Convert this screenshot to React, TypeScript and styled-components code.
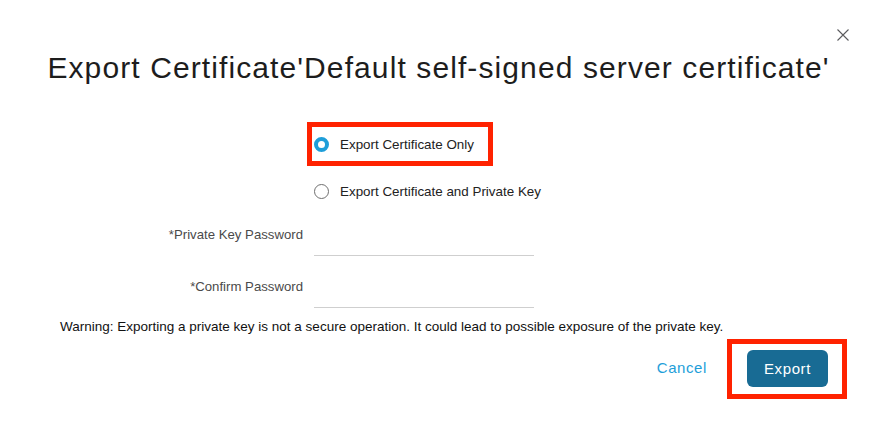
import React from "react";
import styled, { createGlobalStyle } from "styled-components";

const GlobalStyle = createGlobalStyle`
  html, body {
    margin: 0;
    padding: 0;
    background: #ffffff;
  }
  body {
    font-family: "Liberation Sans", Arial, sans-serif;
    color: #222222;
  }
`;

const Dialog = styled.div`
  width: 877px;
  height: 435px;
  box-sizing: border-box;
  padding-top: 29px;
  background: #ffffff;
  display: flex;
  flex-direction: column;
`;

const CloseRow = styled.div`
  display: flex;
  justify-content: flex-end;
  padding-right: 28px;
  height: 12px;
`;

const CloseButton = styled.button`
  width: 12px;
  height: 12px;
  padding: 0;
  border: none;
  background: none;
  display: flex;
  cursor: pointer;
`;

const Title = styled.h1`
  margin: 9px 0 0;
  font-size: 30px;
  line-height: 36px;
  font-weight: 400;
  letter-spacing: 1.1px;
  text-align: center;
  color: #1d1d1d;
  white-space: nowrap;
`;

const Form = styled.div`
  margin-top: 36px;
  display: grid;
  grid-template-columns: 303px 1fr;
  column-gap: 11px;
`;

const FieldLabel = styled.label<{ $top: number }>`
  grid-column: 1;
  text-align: right;
  font-size: 13.2px;
  line-height: 20px;
  color: #4a4a4a;
  padding-top: ${(p) => p.$top}px;
`;

const Cell = styled.div<{ $mt: number }>`
  grid-column: 2;
  margin-top: ${(p) => p.$mt}px;
  display: flex;
`;

const Highlight = styled.div<{ $pad: string; $ml?: number }>`
  border: 5px solid #ff2200;
  padding: ${(p) => p.$pad};
  margin-left: ${(p) => p.$ml ?? 0}px;
  display: inline-flex;
  align-items: center;
`;

const RadioRow = styled.label`
  display: flex;
  align-items: center;
  height: 34px;
  gap: 11px;
  font-size: 13.4px;
  color: #222222;
`;

const RadioDot = styled.span<{ $checked: boolean }>`
  width: 15px;
  height: 15px;
  box-sizing: border-box;
  border-radius: 50%;
  flex: none;
  border: ${(p) => (p.$checked ? "4px solid #1e9ed9" : "1px solid #6f6f6f")};
  background: #ffffff;
`;

const TextInput = styled.input`
  width: 220px;
  height: 32px;
  box-sizing: border-box;
  border: none;
  border-bottom: 1px solid #cfcfcf;
  outline: none;
  background: transparent;
  font-family: inherit;
  font-size: 13px;
`;

const Warning = styled.p`
  margin: 10px 0 0 60px;
  font-size: 13.5px;
  line-height: 18px;
  color: #111111;
`;

const Footer = styled.div`
  margin-top: 3px;
  display: flex;
  justify-content: flex-end;
  align-items: center;
  padding-right: 30px;
  gap: 20px;
`;

const CancelLink = styled.button`
  border: none;
  background: none;
  padding: 0 0 4px;
  font-family: inherit;
  font-size: 15px;
  letter-spacing: 0.6px;
  color: #1e9ed9;
  cursor: pointer;
`;

const ExportButton = styled.button`
  width: 81px;
  height: 37px;
  border: none;
  border-radius: 6px;
  background: #186b94;
  color: #ffffff;
  font-family: inherit;
  font-size: 15px;
  letter-spacing: 0.6px;
  cursor: pointer;
`;

function CloseIcon() {
  return (
    <svg width="12" height="12" viewBox="0 0 12 12">
      <path d="M0.5 0.5L11.5 11.5M11.5 0.5L0.5 11.5" stroke="#5b5b5e" strokeWidth="1.1" fill="none" />
    </svg>
  );
}

export default function App(): JSX.Element {
  return (
    <Dialog>
      <GlobalStyle />
      <CloseRow>
        <CloseButton aria-label="Close">
          <CloseIcon />
        </CloseButton>
      </CloseRow>
      <Title>Export Certificate'Default self-signed server certificate'</Title>

      <Form>
        <Cell $mt={0}>
          <Highlight $pad="0 14px 0 2px" $ml={-7}>
            <RadioRow>
              <RadioDot $checked={true} />
              Export Certificate Only
            </RadioRow>
          </Highlight>
        </Cell>
        <Cell $mt={8}>
          <RadioRow>
            <RadioDot $checked={false} />
            Export Certificate and Private Key
          </RadioRow>
        </Cell>

        <FieldLabel $top={17} style={{ gridRow: 3 }}>*Private Key Password</FieldLabel>
        <Cell $mt={16} style={{ gridRow: 3 }}>
          <TextInput type="password" />
        </Cell>

        <FieldLabel $top={21} style={{ gridRow: 4 }}>*Confirm Password</FieldLabel>
        <Cell $mt={20} style={{ gridRow: 4 }}>
          <TextInput type="password" />
        </Cell>
      </Form>

      <Warning>
        Warning: Exporting a private key is not a secure operation. It could lead to possible exposure of the private key.
      </Warning>

      <Footer>
        <CancelLink>Cancel</CancelLink>
        <Highlight $pad="6px 14px 7px 15px">
          <ExportButton>Export</ExportButton>
        </Highlight>
      </Footer>
    </Dialog>
  );
}
